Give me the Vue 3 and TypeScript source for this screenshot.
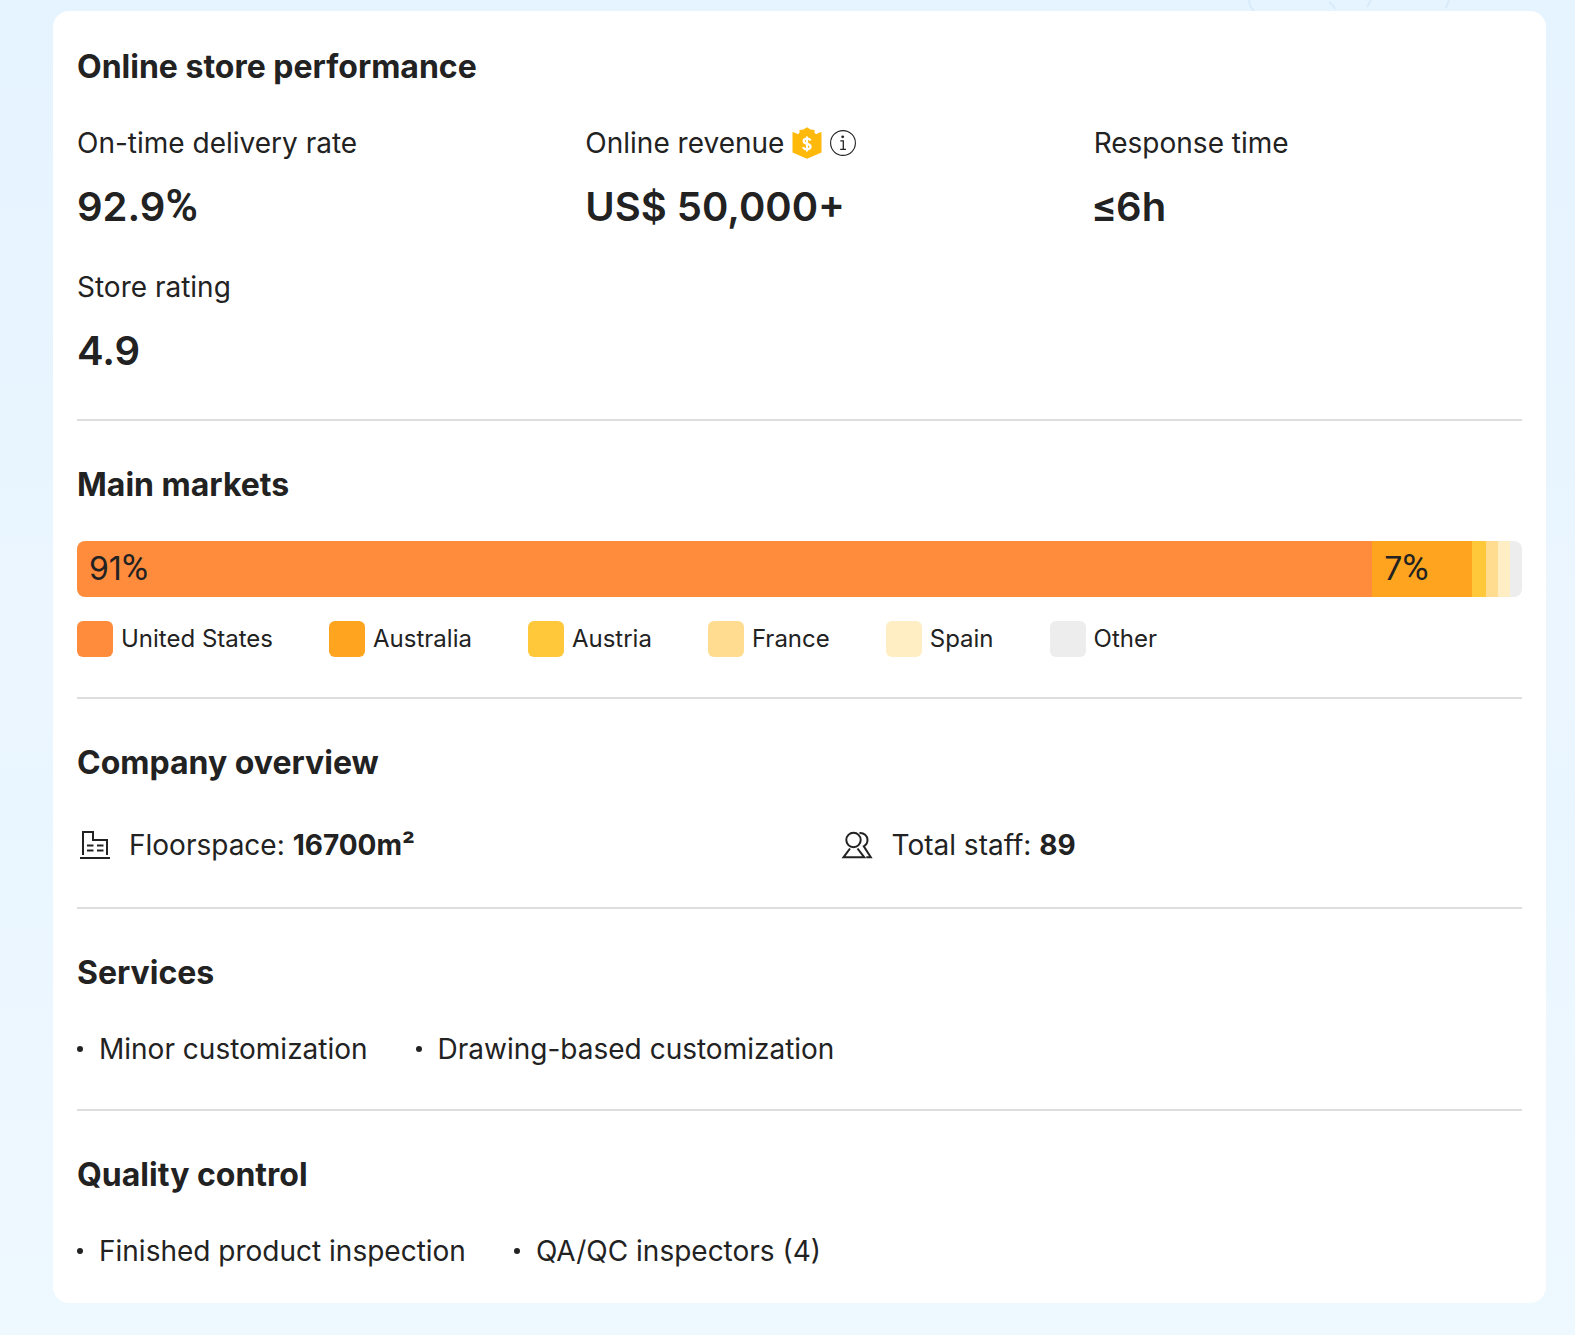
<script setup lang="ts">
interface Market {
  name: string
  share: number
  color: string
  labelled?: boolean
}

const markets: Market[] = [
  { name: 'United States', share: 91, color: '#ff8b3d', labelled: true },
  { name: 'Australia', share: 7, color: '#ffa41f', labelled: true },
  { name: 'Austria', share: 1, color: '#ffc83a' },
  { name: 'France', share: 0, color: '#ffdc8f' },
  { name: 'Spain', share: 0, color: '#ffedc4' },
  { name: 'Other', share: 0, color: '#ededed' },
]

const services: string[] = ['Minor customization', 'Drawing-based customization']
const controls: string[] = ['Finished product inspection', 'QA/QC inspectors (4)']
</script>

<template>
  <div class="page">
    <svg class="backdrop" width="240" height="12" viewBox="0 0 240 12" fill="none" stroke="#d9ebf8" stroke-width="2" aria-hidden="true">
      <path d="M14 0c0 4 2 8 5 11M94 2c3 2 5 4 6 7M136 0l-4 7M214 0l-3 8" />
    </svg>
    <main class="card">
      <section class="section">
        <h2>Online store performance</h2>
        <dl class="metrics">
          <div class="metric">
            <dt>On-time delivery rate</dt>
            <dd>92.9<span class="sign">%</span></dd>
          </div>
          <div class="metric">
            <dt>
              Online revenue
              <svg class="badge" width="30" height="32" viewBox="0 0 30 32" aria-hidden="true">
                <path fill="#ffb90a" d="M.5 5 3 5.800 6 7.300 7.500 5.800V3L11.500 2.500 15 .3l3.500 2.200L22.500 3v2.800L24 7.300l3-1.500L29.500 5v20.500L15 31.800.5 25.500z" />
                <path d="M18.600 13.400c-.7-1.200-1.900-1.700-3.600-1.700-2 0-3.400.9-3.400 2.600 0 3.700 7 1.500 7 5.300 0 1.700-1.500 2.700-3.600 2.700-2 0-3.400-.8-4-2.200M15 9.500v15" fill="none" stroke="#fff" stroke-width="2.200" />
              </svg>
              <button class="info" type="button" aria-label="About online revenue">
                <svg width="26" height="26" viewBox="0 0 26 26" aria-hidden="true">
                  <circle cx="13" cy="13" r="12.400" fill="none" stroke="#222" stroke-width="1.100" />
                  <circle cx="12.700" cy="6.800" r="1.400" fill="#222" />
                  <path d="M10.300 10.800h3v8.400M10.200 19.400h5.800" fill="none" stroke="#222" stroke-width="1.300" />
                </svg>
              </button>
            </dt>
            <dd>US$ 50,000+</dd>
          </div>
          <div class="metric">
            <dt>Response time</dt>
            <dd><span class="sign">≤</span>6h</dd>
          </div>
          <div class="metric">
            <dt>Store rating</dt>
            <dd>4.9</dd>
          </div>
        </dl>
      </section>

      <section class="section markets">
        <h2>Main markets</h2>
        <div class="bar">
          <div
            v-for="m in markets"
            :key="m.name"
            class="segment"
            :style="{ flexGrow: m.share, background: m.color }"
          >
            <p v-if="m.labelled">{{ m.share }}<span class="sign">%</span></p>
          </div>
        </div>
        <ul class="legend">
          <li v-for="m in markets" :key="m.name">
            <i class="swatch" :style="{ background: m.color }"></i>{{ m.name }}
          </li>
        </ul>
      </section>

      <section class="section">
        <h2>Company overview</h2>
        <div class="facts">
          <div class="fact">
            <svg width="36" height="36" viewBox="0 0 36 36" fill="none" stroke="#222" stroke-width="2" aria-hidden="true">
              <path d="M3 31h30M6 28V5h10v8h14v15M10 18.500h6.500M20 18.500h6.500M10 23.500h6.500M20 23.500h6.500" />
            </svg>
            <p>Floorspace: <strong>16700m²</strong></p>
          </div>
          <div class="fact">
            <svg width="36" height="36" viewBox="0 0 36 36" fill="none" stroke="#222" stroke-width="2" aria-hidden="true">
              <circle cx="13.500" cy="13" r="7.200" />
              <path d="M10 21.500 3.500 30.300h20.800L17.500 21.500M19.500 6.100c4.500-.4 8 2.700 8 7 0 2.800-1.400 5-3.700 6.200l7 11h-4.500" />
            </svg>
            <p>Total staff: <strong>89</strong></p>
          </div>
        </div>
      </section>

      <section class="section">
        <h2>Services</h2>
        <ul class="bullets">
          <li v-for="s in services" :key="s">{{ s }}</li>
        </ul>
      </section>

      <section class="section">
        <h2>Quality control</h2>
        <ul class="bullets">
          <li v-for="c in controls" :key="c">{{ c }}</li>
        </ul>
      </section>
    </main>
  </div>
</template>

<style>
body {
  margin: 0;
  background: #edf7ff;
}
</style>

<style scoped>
.page {
  position: relative;
  min-height: 100vh;
  box-sizing: border-box;
  padding: 11px 29px 32px 53px;
  background: linear-gradient(180deg, #e6f4ff 0%, #e8f5ff 35%, #ecf6ff 45%, #eaf6ff 60%, #eef8ff 100%);
  color: #222;
  font-family: Inter, "Liberation Sans", sans-serif;
  font-size: 28px;
  line-height: 40px;
}
.backdrop {
  position: absolute;
  top: 0;
  right: 100px;
}
.card {
  position: relative;
  padding: 0 24px;
  border-radius: 16px;
  background: #fff;
}
.section {
  padding: 44px 0 40px;
  border-bottom: 2px solid #ddd;
}
.section:first-child {
  padding: 36px 0 44px;
}
.section:last-child {
  padding-bottom: 32px;
  border-bottom: 0;
}
h2 {
  margin: 0 0 36px;
  font-size: 32px;
  line-height: 40px;
  font-weight: 700;
}
dl,
dd,
p,
ul {
  margin: 0;
  padding: 0;
}
ul {
  list-style: none;
}
.metrics {
  display: grid;
  grid-template-columns: repeat(3, 1fr);
  gap: 36px 80px;
}
dt {
  display: flex;
  align-items: center;
  gap: 8px;
  height: 40px;
  margin-bottom: 20px;
}
dd {
  height: 48px;
  font-size: 40px;
  line-height: 48px;
  font-weight: 600;
}
.sign {
  font-family: Roboto, "Liberation Sans", sans-serif;
  font-size: 44px;
  line-height: 1;
}
.info {
  display: flex;
  padding: 0;
  border: 0;
  background: none;
}
.bar {
  display: flex;
  height: 56px;
  overflow: hidden;
  border-radius: 8px;
}
.segment {
  flex: 0 0 0;
  min-width: 12px;
  font-size: 32px;
  line-height: 56px;
}
.segment p {
  padding-left: 12px;
}
.segment .sign {
  font-size: 36px;
}
.legend {
  display: flex;
  flex-wrap: wrap;
  gap: 16px 56px;
  margin-top: 24px;
  font-size: 24px;
  line-height: 36px;
}
.legend li {
  display: flex;
  gap: 8px;
}
.swatch {
  width: 36px;
  height: 36px;
  border-radius: 6px;
}
.facts {
  display: grid;
  grid-template-columns: repeat(2, 1fr);
  gap: 80px;
  padding: 6px 0 2px;
}
.fact {
  display: flex;
  align-items: center;
  gap: 16px;
}
strong {
  font-weight: 700;
}
.bullets {
  display: flex;
  flex-wrap: wrap;
  gap: 16px 48px;
}
.bullets li {
  display: flex;
  align-items: center;
  gap: 16px;
}
.bullets li::before {
  content: "";
  width: 6px;
  height: 6px;
  border-radius: 50%;
  background: #222;
}
</style>
